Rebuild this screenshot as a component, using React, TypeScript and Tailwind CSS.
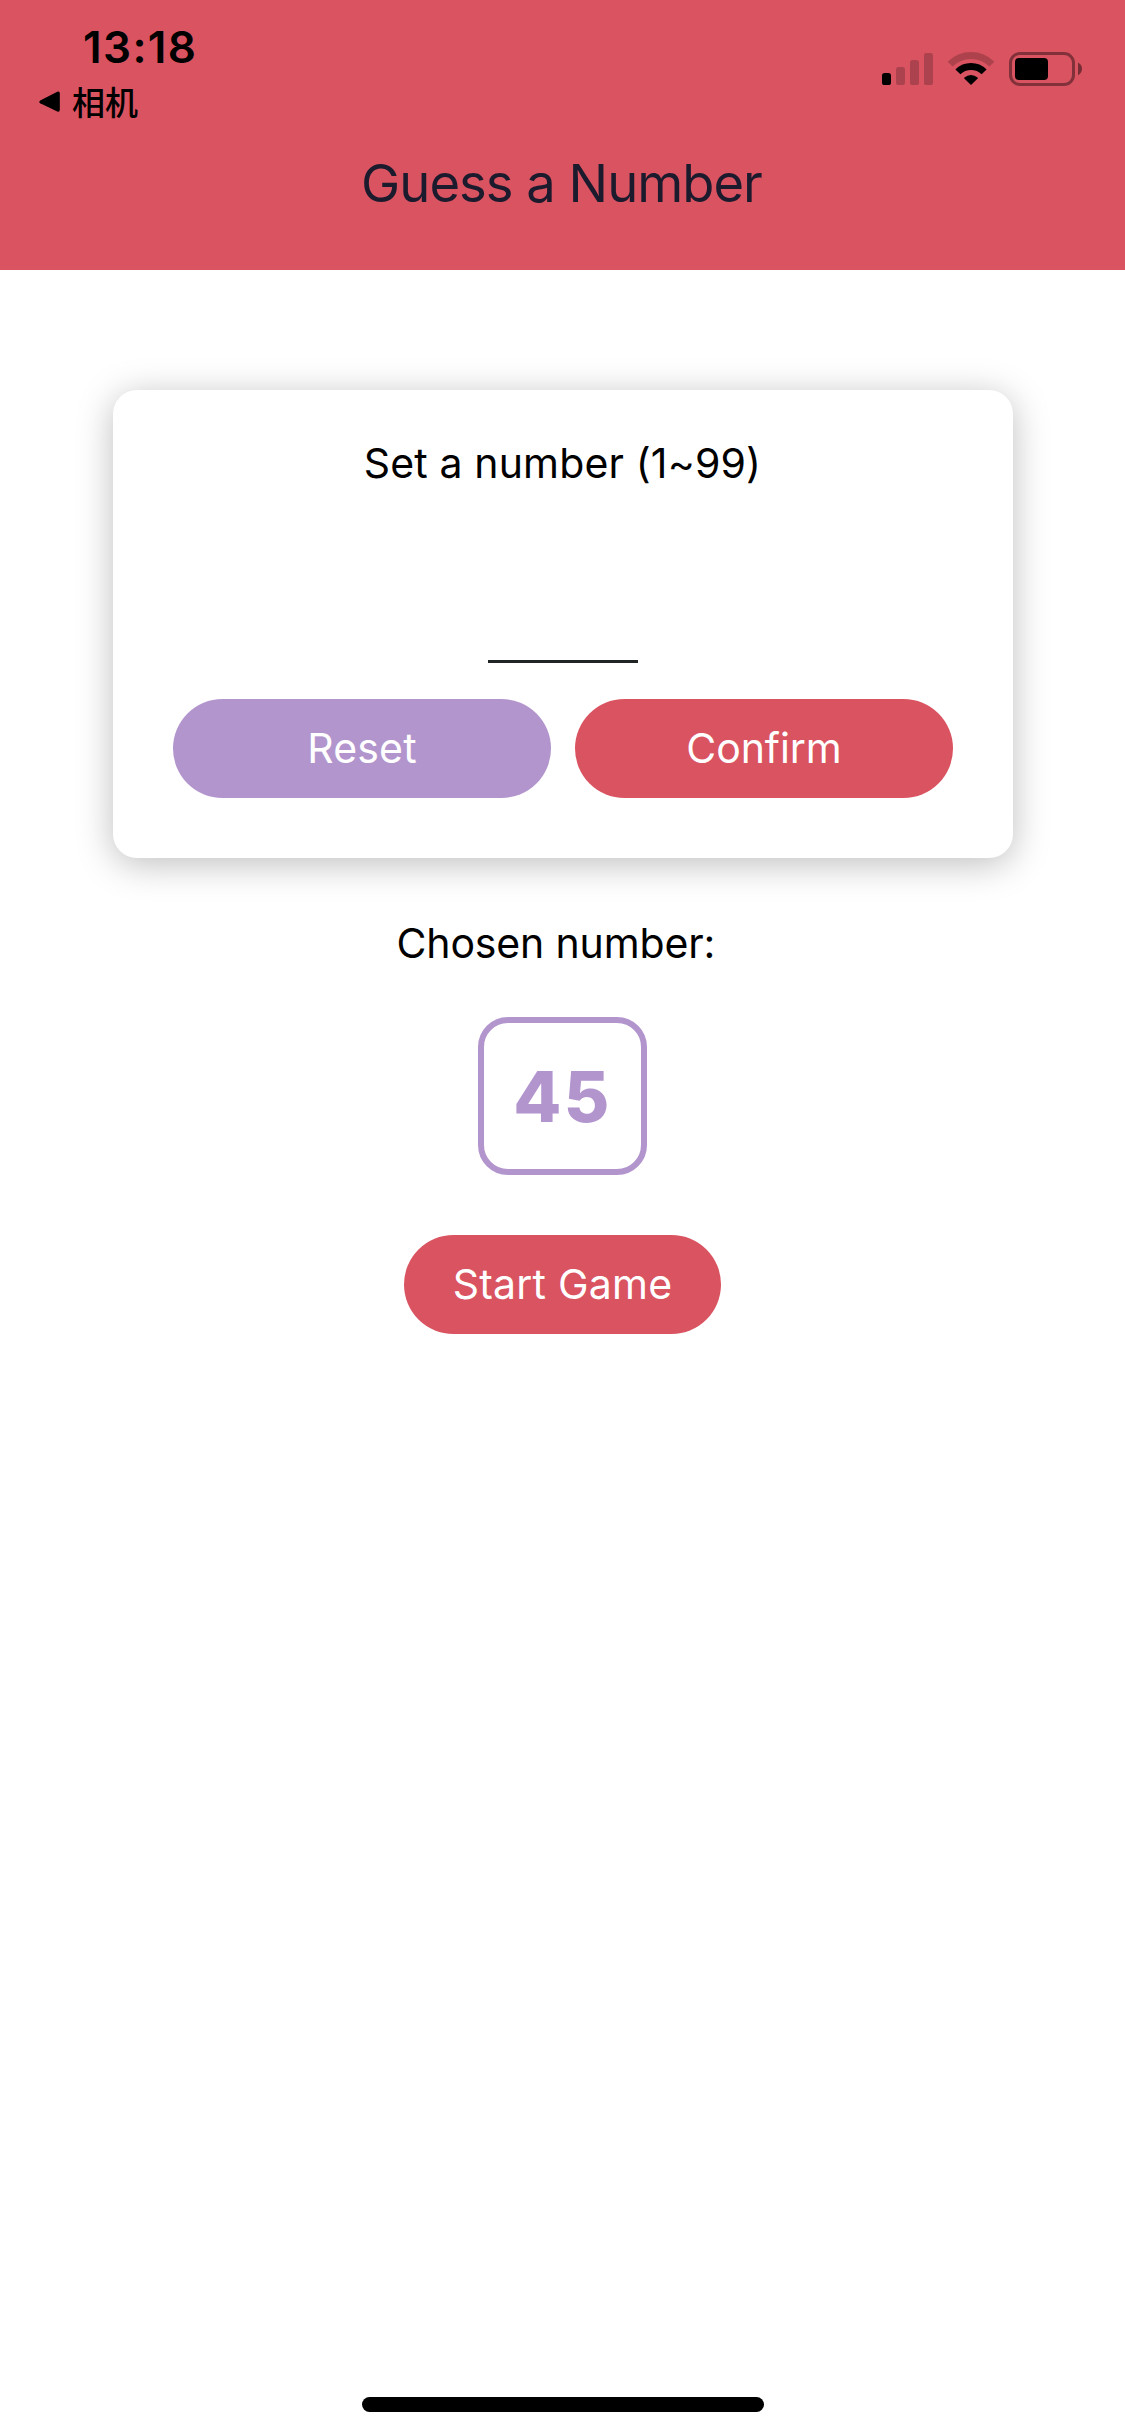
import type { ReactNode } from "react";

function StatusIcons() {
  return (
    <svg width="205" height="38" viewBox="880 50 205 38" aria-hidden="true">
      <rect x="882" y="73" width="9" height="12" rx="2.6" />
      <g opacity="0.2">
        <rect x="896" y="67" width="9" height="18" rx="2.6" />
        <rect x="910" y="60" width="9" height="25" rx="2.6" />
        <rect x="924" y="53" width="9" height="32" rx="2.6" />
      </g>
      <g fill="none" stroke="#000" strokeWidth="7">
        <path d="M950.1 64.1 A29.5 29.5 0 0 1 991.9 64.1" opacity="0.2" />
        <path d="M957.9 71.9 A18.5 18.5 0 0 1 984.1 71.9" />
      </g>
      <path d="M971 85 L964.3 78.6 Q963.8 78 964.5 77.5 Q967.4 74.9 971 74.9 Q974.6 74.9 977.5 77.5 Q978.2 78 977.7 78.6 Z" />
      <rect x="1010.5" y="53.5" width="63" height="31" rx="9.5" fill="none" stroke="#000" strokeWidth="3" opacity="0.4" />
      <rect x="1015" y="58" width="33" height="22" rx="4" />
      <path d="M1078 62.5 Q1082 64.5 1082 68.8 Q1082 73 1078 75.2 Z" opacity="0.45" />
    </svg>
  );
}

function Button({ className, children }: { className: string; children: ReactNode }) {
  return (
    <button
      type="button"
      className={`flex h-[99px] items-center justify-center rounded-full text-[41px] leading-none text-white ${className}`}
    >
      {children}
    </button>
  );
}

export default function App() {
  return (
    <div className="flex h-[2436px] w-[1125px] flex-col bg-white font-['Inter','Noto_Sans_CJK_SC',sans-serif] text-black">
      <header className="h-[270px] bg-[#d95361]">
        <div className="flex h-[130px] justify-between pr-10">
          <div className="pt-[22px]">
            <p className="pl-[83px] text-[44px] leading-[50px] font-semibold tracking-[1.4px]">13:18</p>
            <div className="mt-1 flex items-center pl-[39px]">
              <svg width="21" height="22" viewBox="0 0 21 22" className="mt-0.5" aria-hidden="true">
                <path d="M1.2 9.6 L18.3 0.8 Q20.8 0 20.8 2.6 V18.6 Q20.8 21.4 18.3 20.6 L1.2 12.2 Q-0.6 10.9 1.2 9.6 Z" />
              </svg>
              <span className="ml-3 font-['Noto_Sans_CJK_SC',sans-serif] text-[33px] leading-[50px] font-medium">
                相机
              </span>
            </div>
          </div>
          <div className="pt-[50px]">
            <StatusIcons />
          </div>
        </div>
        <h1 className="pr-0.5 text-center text-[52.5px] leading-[106px] tracking-[-0.97px] text-[#1c1b2e]">
          Guess a Number
        </h1>
      </header>

      <main className="flex flex-1 flex-col items-center pt-[120px]">
        <section className="flex h-[468px] w-[900px] flex-col items-center rounded-3xl bg-white px-[60px] pt-12 pb-[60px] shadow-[0_6px_36px_rgba(0,0,0,0.26)]">
          <p className="text-[41px] leading-[50px] tracking-[0.15px]">Set a number (1~99)</p>
          <input
            aria-label="Number"
            className="mt-auto h-[90px] w-[150px] border-b-[3px] border-[#212424] bg-transparent text-center text-[41px] outline-none"
          />
          <div className="mt-9 flex w-full gap-6">
            <Button className="w-[378px] bg-[#b395ce] pl-px tracking-[0.19px]">Reset</Button>
            <Button className="w-[378px] bg-[#d95361] pl-px tracking-[-0.06px]">Confirm</Button>
          </div>
        </section>

        <p className="mt-[60px] pr-0.5 text-[41px] leading-[50px] tracking-[-0.15px] whitespace-pre">
          {"Chosen number: "}
        </p>
        <div className="mt-[49px] flex h-[158px] w-[169px] items-center justify-center rounded-[30px] border-[6px] border-[#b395ce] pt-0.5 text-[70px] leading-none font-extrabold tracking-[2.4px] text-[#b395ce]">
          45
        </div>
        <Button className="mt-[60px] w-[317px] bg-[#d95361] tracking-[0.22px]">Start Game</Button>

        <div className="mt-auto mb-6 h-[15px] w-[402px] rounded-full bg-black" />
      </main>
    </div>
  );
}
